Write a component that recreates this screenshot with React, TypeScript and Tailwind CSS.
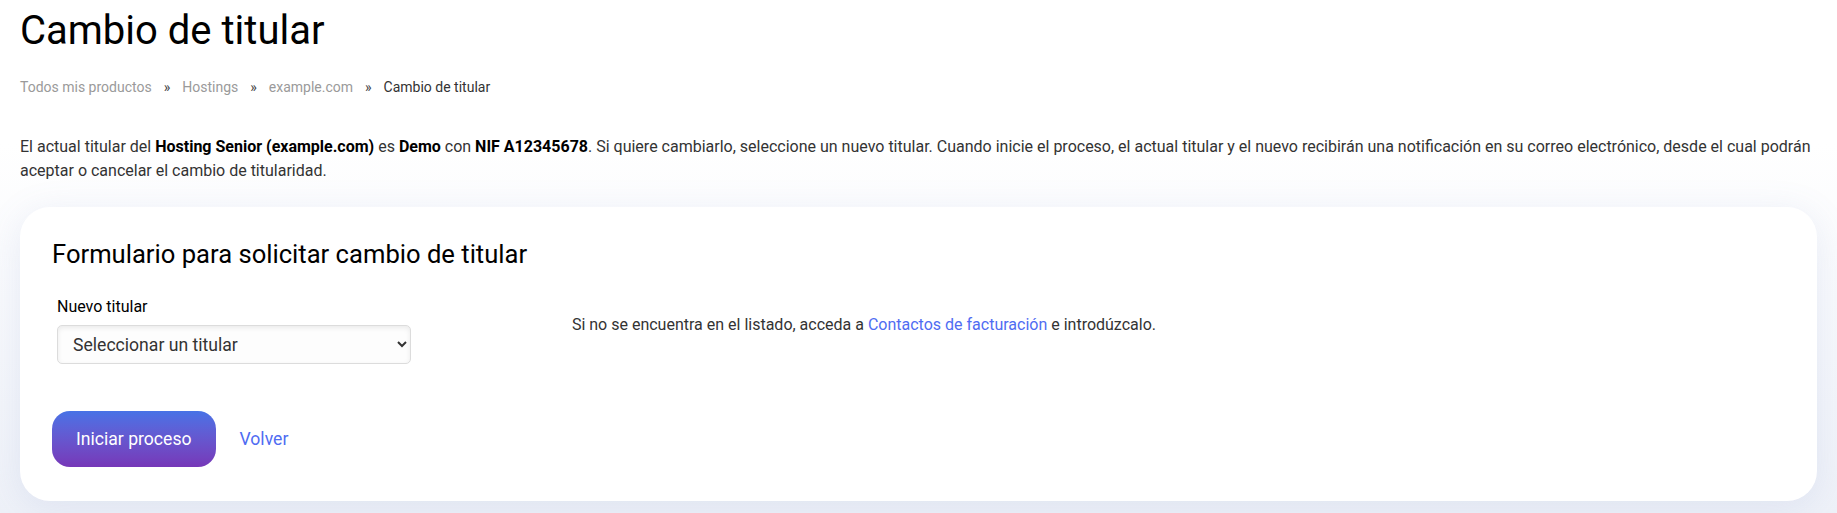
import { useState } from "react";

const crumbs = ["Todos mis productos", "Hostings", "example.com"];

export default function App() {
  const [owner, setOwner] = useState("");

  return (
    <div
      className="min-h-[513px] px-5 pb-3 font-['Roboto',sans-serif] text-[#333]"
      style={{ background: "linear-gradient(180deg, #ffffff 0%, #ffffff 28%, #eef1f8 100%)" }}
    >
      <h1 className="pt-[7px] text-[40px] leading-[48px] font-normal text-black">Cambio de titular</h1>

      <nav className="mt-[22px] flex items-center text-[14px] leading-5">
        {crumbs.map((c) => (
          <span key={c} className="flex items-center">
            <a href="#" className="text-[#9a9a9a]">{c}</a>
            <span className="px-[12px] text-[#444]">»</span>
          </span>
        ))}
        <span className="text-[#333]">Cambio de titular</span>
      </nav>

      <p className="mt-[38px] text-[16px] leading-6 text-[#333]">
        El actual titular del <b className="font-bold text-black">Hosting Senior (example.com)</b> es{" "}
        <b className="font-bold text-black">Demo</b> con <b className="font-bold text-black">NIF A12345678</b>. Si quiere
        cambiarlo, seleccione un nuevo titular. Cuando inicie el proceso, el actual titular y el nuevo recibirán una
        notificación en su correo electrónico, desde el cual podrán aceptar o cancelar el cambio de titularidad.
      </p>

      <div className="mt-[24px] rounded-[30px] bg-white px-8 pt-[32px] pb-[34px] shadow-[0_6px_36px_rgba(110,130,190,0.13)]">
        <h2 className="text-[25.6px] leading-[30px] font-normal text-black">
          Formulario para solicitar cambio de titular
        </h2>

        <div className="mt-[26px] flex">
          <div className="w-[30%] px-[5px]">
            <label className="block text-[16px] leading-6 text-black">Nuevo titular</label>
            <select
              value={owner}
              onChange={(e) => setOwner(e.target.value)}
              className="mt-[6px] h-[39px] w-[354px] rounded-[5px] border border-[#dcdcdc] bg-[#fdfdfd] pl-[11px] pr-2 text-[17.6px] text-[#333] shadow-[inset_0_2px_5px_rgba(0,0,0,0.08)] outline-none"
            >
              <option value="">Seleccionar un titular</option>
              <option value="demo">Demo</option>
            </select>
          </div>
          <p className="mt-[18px] text-[16px] leading-6 text-[#333]">
            Si no se encuentra en el listado, acceda a{" "}
            <a href="#" className="text-[#4f6cf2]">Contactos de facturación</a> e introdúzcalo.
          </p>
        </div>

        <div className="mt-[47px] flex items-center gap-6">
          <button className="h-14 rounded-[18px] bg-gradient-to-b from-[#4672e6] to-[#7637b8] px-6 text-[17.6px] text-white">
            Iniciar proceso
          </button>
          <a href="#" className="text-[17.6px] text-[#4f6cf2]">Volver</a>
        </div>
      </div>
    </div>
  );
}
